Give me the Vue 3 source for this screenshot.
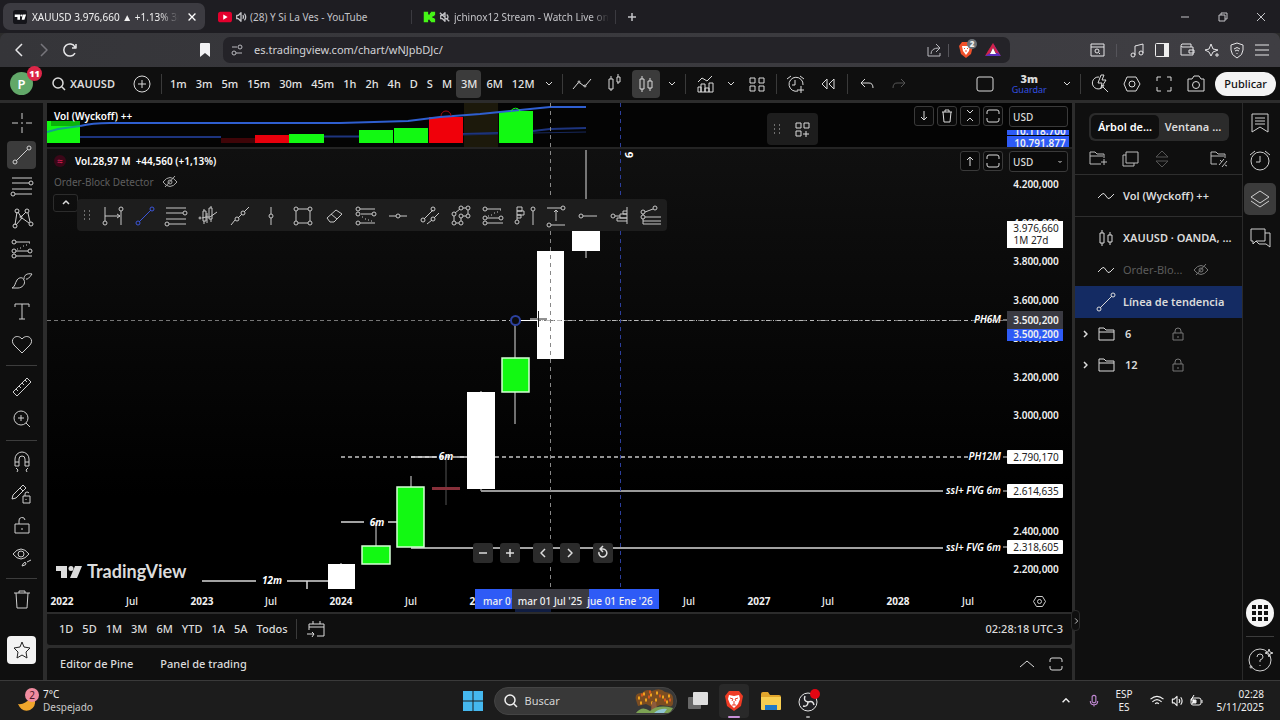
<script setup>
import { h, ref } from 'vue'

const c = (x, y, r = 2) => `M${x - r} ${y}a${r} ${r} 0 1 0 ${2 * r} 0a${r} ${r} 0 1 0 ${-2 * r} 0`

const fib = 'M-10-8H10M-10-3H7M-10 3H10M-7 8H10' + c(9, -3) + c(-9, 8)
const fibExt = 'M-6-7H8M-6 2H6M-6 7H10M-5 0h1M-2-1h1M1-3h1M4-4h1M7-6h1' + c(-8, -7) + c(-8, 2) + c(8, 2) + c(-8, 7)
const trend = 'M-6 6L6-6' + c(7, -7) + c(-7, 7)
const lock = 'M-5-1H5V6H-5ZM-3-1V-3A3 3 0 0 1 3-3V-1M0 2V4'
const expand = 'M-6-2V-4Q-6-6-4-6H4Q6-6 6-4V-2M6 2V4Q6 6 4 6H-4Q-6 6-6 4V2'
const eyeOff = 'M-7 0Q0-9 7 0Q0 9-7 0Z' + c(0, 0, 2) + 'M-5 5L5-6'
const candles = 'M-6-5H-2V5H-6ZM-4-8V-5M-4 5V8M2-3H6V4H2ZM4-6V-3M4 4V7'

const icons = {
  cross: 'M0-10V-4M0 4V10M-10 0H-4M4 0H10M0-1V1',
  trend, fib, fibExt,
  pattern: 'M-7 7L-5-6M-4-6L-1-1L4-6M6-5L8 4M7 5L0 0L-6 7' + c(-5, -7) + c(5, -7) + c(-1, -1, 1) + c(-7, 8) + c(9, 6),
  brush: 'M-10 7C-7 6-7 2-5-1C-3-4 1-4 2-1C4 3 0 7-4 7ZM2-2C2-6 5-8 10-7M4-2Q6-1 10-7',
  text: 'M-7-5V-8H7V-5M0-8V7M-3 7H3',
  heart: 'M0 9L-8 1C-13-5-5-11 0-5C5-11 13-5 8 1Z',
  ruler: 'M-9 5L5-9L9-5L-5 9ZM-6 2L-4 4M-3-1L-1 1M0-4L2-2M3-7L5-5',
  zoom: c(-1, -1, 7) + 'M4 4L8 8M-4-1H2M-1-4V2',
  magnet: 'M-7 4V-3A7 7 0 0 1 7-3V4H3V-3A3 3 0 0 0-3-3V4ZM-7 0H-3M3 0H7M-6 6L-4 8L-5 10M6 6L4 8L5 10',
  penLock: 'M-9 1L1-9L4-6L-6 4L-10 5ZM-2-6L1-3M1 2H8V9H1ZM3 2V0Q3-2 5-2Q6-2 7-1M4 5V6',
  unlock: 'M-7-1H7V8H-7ZM-3-1V-4A3 3 0 0 1 3-5M0 3V5',
  eyePen: 'M-9-3Q-1-13 7-3Q-1 7-9-3Z' + c(-1, -3, 3) + 'M0 9Q2 4 4 6Q5 8 0 9M5 5L9 3',
  trash: 'M-8-7H8M-3-7V-9H3V-7M-6-7L-5 8H5L6-7',
  star: 'M0-8L2-3L8-2L4 2L5 8L0 5L-5 8L-4 2L-8-2L-2-3Z',
  range: 'M-8-9V5M8-5V9M-8 0H7M4-2L7 0L4 2' + c(-8, 7) + c(8, -7),
  patternBars: 'M-6 2L-2 1L2 1L9-4M-5-5H-2V5H-5ZM-4-7V-5M-4 5V8M1-8H4V3H1ZM3-10V-8M3 3V6M-1-3V7' + c(-8, 2, 1),
  segment: 'M-9 9L-5 4M-2 2L2-2M4-4L9-9' + c(-3, 3) + c(3, -3),
  vline: 'M0-9V-2M0 2V9' + c(0, 0),
  hline: 'M-9 0H-2M2 0H9' + c(0, 0),
  rect: 'M-5-7H5M-5 7H5M-7-5V5M7-5V5' + c(-7, -7) + c(7, -7) + c(-7, 7) + c(7, 7),
  eraser: 'M-8 2L1-6L7-2L-1 6H-5ZM-4-2L2 3',
  fibChan: 'M-6-7H9M-5-2H6M-6 7H9M-4 1h1M-1 3h1M2 4h1M5 5h1' + c(-8, -7) + c(-8, -2) + c(8, -2) + c(-8, 7),
  channel: 'M-6 3L3-6M-3 8L2 4M4 2L9-3' + c(-7, 4) + c(3, -7) + c(3, 3),
  poly: 'M-6-3L-1-7M2-8H5M7-6V-2M5 0H2M0 2V5M-2 7H-5M-7 5V0' + [[-7, -2], [0, -8], [7, -8], [7, 0], [0, 0], [0, 7], [-7, 7]].map(p => c(p[0], p[1], 2)).join(''),
  profile: 'M-8-9V4M-8-9H-3V-5H-8M-8-5H-1V-1H-8M-8-1H-4V2H-8M8-5V9' + c(-8, 6) + c(8, -7),
  priceRange: 'M-9-8H5M-5 9H9M0 5V-6M-2-4L0-6L2-4' + c(7, -8) + c(-7, 9),
  ray: 'M-5 0H9' + c(-7, 0),
  anchored: 'M7-9V8M7-5H3V-2H7M7-2H0V2H7M7 2H-3V5H7M-5 0H0' + c(-7, 0),
  pitch: 'M2-7L-6-4M-8-2V-1M-6 1H10M-8 3V5H10M-8 5V8H10' + c(4, -8) + c(-8, -4) + c(-8, 1),
  search: c(-1, -1, 5) + 'M3 3L6 6',
  plusCircle: c(0, 0, 8) + 'M-4 0H4M0-4V4',
  down: 'M-3-2L0 1L3-2',
  up: 'M-3 1L0-2L3 1',
  bigUp: 'M-7 3L0-3L7 3',
  left: 'M2-4L-2 0L2 4',
  right: 'M-2-4L2 0L-2 4',
  small: 'M-1-3L2 0L-1 3',
  line: 'M-9 5L-4-1M-2-1L2 2M4 1L9-5' + c(-3, -2, 1) + c(3, 2, 1),
  hollow: 'M-5-5H-1V5H-5ZM-3-8V-5M-3 5V7M3-7H6V-2H3ZM4-10V-7M4-2V0',
  candles,
  indicators: 'M-7 8V3H-4V8M-4 8V0H0V8M0 8V4H4V8M4 8V-1H8V8H-7M-7-2L-3-6L2-3L7-8',
  grid4: 'M-7-6H-2V-1H-7ZM2-6H7V-1H2ZM-7 2H-2V7H-7ZM2 2H7V7H2Z',
  gridPlus: 'M-6-6H-1V-1H-6ZM2-6H7V-1H2ZM-6 2H-1V7H-6ZM4 2V8M1 5H7',
  alert: 'M2 7A7 7 0 1 1 7 1M-1-4V1H-4M5 2V9M1 6H8M-9-5L-5-8M4-8L8-5',
  rewind: 'M-1-5V5L-6 0ZM6-5V5L1 0Z',
  undo: 'M-2-5L-6-1L-2 3M-6-1H2Q6-1 6 4',
  redo: 'M2-5L6-1L2 3M6-1H-2Q-6-1-6 4',
  square: 'M-6-7H6Q8-7 8-5V5Q8 7 6 7H-6Q-8 7-8 5V-5Q-8-7-6-7Z',
  quick: 'M3 3L8 8M-1-7A6 6 0 1 0 4 1M1-9L-2-1H2L1 4L6-4H2L4-9Z',
  hex: 'M-5-7H4L8 0L4 7H-5L-8 0Z' + c(0, 0, 3),
  full: 'M-7-3V-7H-3M3-7H7V-3M7 3V7H3M-3 7H-7V3',
  camera: 'M-8-5H-4L-2-8H3L5-5H8V7H-8Z' + c(0, 1, 3.5),
  arrowDown: 'M0-5V4M-3 1L0 4L3 1',
  arrowUp: 'M0 5V-4M-3-1L0-4L3-1',
  bin: 'M-5-4H5M-2-4V-6H2V-4M-4-4L-3 6H3L4-4',
  collapse: 'M-3-6L0-3L3-6M-3 5L0 2L3 5',
  expand, eyeOff,
  folder: 'M-8-6H-3L-1-4H7V6H-8ZM-8-2H7',
  folderPlus: 'M3 5H-8V-7H-3L-1-5H6V-1M-8-3H5M6 0V6M3 3H9',
  copy: 'M-4-7H8V4H-4ZM-4-4H-7V7H4V4',
  sort: 'M0-8L6-2H-6ZM0 8L6 2H-6Z',
  folderOff: 'M-2 5H-8V-7H-3L-1-5H6V-1M-8-3H5M0 6L5 0M3 8L8 2M1 1L3 3M6 6L8 7',
  wave: 'M-8 2L-4-2Q-2-4 0 0Q2 4 4 2L8-2',
  lock,
  watch: 'M-8-9H8V9L0 4L-8 9ZM-5-5H5M-5-2H5M-5 1H5',
  clock: c(0, 0, 9) + 'M0-5V1H-4M-10-6L-5-10M10-6L5-10',
  layers: 'M0-8L9-2L0 4L-9-2ZM-9 2L0 8L9 2',
  chat: 'M-9-8H5V4H-4L-7 7V4H-9ZM5-4H10V10L6 7H-1L-4 4',
  help: c(0, 0, 11) + 'M-3-3Q-3-6 0-6T3-3Q3-1 0 0V2M0 5V6M9-11L10-8L13-7L10-6L9-3L8-6L5-7L8-8Z' + c(-9, 7, 1),
  calendar: 'M-7 1V-5H8V7H1M-7-2H8M-3-8V-5M4-8V-5M-9 5H-2M-4 3L-2 5L-4 8',
  minus: 'M-4 0H4',
  plus: 'M-4 0H4M0-4V4',
  reset: 'M-4-1A4 4 0 1 0 0-4H-2M0-7L-3-4L0-1',
  reload: 'M6-3A6 6 0 1 0 6 3M7-6V-2H3',
  share: 'M-6-3V6H6V3M-3 4Q-3-2 5-2M2-6L6-2L2 2',
  tune: 'M-5-3H0M-1 3H5' + c(3, -3) + c(-3, 3),
  tabSearch: 'M-6-6H7V6H-6ZM-6-3H7' + c(0, 1, 2) + 'M2 3L3 4',
  music: 'M-2 5V-4L6-6V3' + c(-4, 5) + c(4, 3),
  wallet: 'M-6-4V5H6V-3H-5Q-7-5-5-6H4V-3M2 0H7V3H2Z',
  spark: 'M-1-6L1-1L6 0L1 2L-1 6L-3 2L-7 0L-3-1ZM5 3V7M3 5H7',
  shield: 'M0-7L6-5V0Q6 5 0 8Q-6 5-6 0V-5ZM-3-1Q0-4 3-1M-2 1Q0-1 2 1M0 3V4',
  menu: 'M-7-5H7M-7 0H7M-7 5H7',
  close: 'M-4-4L4 4M4-4L-4 4',
  restore: 'M-4-2H2V4H-4ZM-2-2V-4H4V2H2',
  wifi: 'M-7-2Q0-8 7-2M-5 1Q0-4 5 1M-2 3Q0 1 2 3M0 5V5',
  speaker: 'M-5-2H-3L0-5V5L-3 2H-5ZM2-2Q4 0 2 2M4-4Q7 0 4 4',
  muted: 'M-5-2H-3L0-5V5L-3 2H-5ZM2-3Q5 0 2 3M-6-5L5 5',
  mic: 'M-2-5Q0-7 2-5V1Q0 3-2 1ZM-4 0Q-4 4 0 4T4 0M0 4V6',
}
const Icon = ({ name }) => h('svg', { class: 'icon', viewBox: '-14 -14 28 28', 'aria-hidden': 'true' }, [h('path', { d: icons[name] })])
Icon.props = ['name']

const intervals = ['1m', '3m', '5m', '15m', '30m', '45m', '1h', '2h', '4h', 'D', 'S', 'M', '3M', '6M', '12M']
const toolGroups = [
  { id: 'draw', items: [['cross', 'Cursor'], ['trend', 'Línea de tendencia'], ['fib', 'Fibonacci'], ['pattern', 'Patrones'], ['fibExt', 'Proyección'], ['brush', 'Pincel'], ['text', 'Texto'], ['heart', 'Iconos']] },
  { id: 'measure', items: [['ruler', 'Medir'], ['zoom', 'Acercar']] },
  { id: 'manage', items: [['magnet', 'Imán'], ['penLock', 'Modo dibujo'], ['unlock', 'Bloquear'], ['eyePen', 'Ocultar']] },
]
const favs = ['range', 'trend', 'fib', 'patternBars', 'segment', 'vline', 'rect', 'eraser', 'fibChan', 'hline', 'channel', 'poly', 'fibExt', 'profile', 'priceRange', 'ray', 'anchored', 'pitch']
const prices = [['4.200,000', 184], ['4.000,000', 223], ['3.800,000', 261], ['3.600,000', 300], ['3.400,000', 338], ['3.200,000', 377], ['3.000,000', 415], ['2.400,000', 531], ['2.200,000', 569]]
const tags = [['2.790,170', 457], ['2.614,635', 491], ['2.318,605', 547]]
const times = [['2022', 62], ['Jul', 132], ['2023', 202], ['Jul', 271], ['2024', 341], ['Jul', 411], ['2025', 481], ['Jul', 689], ['2027', 759], ['Jul', 828], ['2028', 898], ['Jul', 968]]
const ranges = ['1D', '5D', '1M', '3M', '6M', 'YTD', '1A', '5A', 'Todos']
const volumes = [[47, 33, 121, '#12f912'], [221, 34, 138, '#3f0508'], [255, 34, 135, '#e8000c'], [289, 35, 134, '#12f912'], [359, 34, 130, '#12f912'], [394, 34, 128, '#12f912'], [429, 34, 117, '#f0000a'], [499, 34, 111, '#12f912']]
const wicks = [[586, 150, 258], [515, 320, 424], [481, 391, 491], [411, 476, 487], [376, 522, 546], [341, 563, 566]]
const solid = [[572, 204, 28, 47], [537, 251, 27, 108], [467, 392, 28, 97], [328, 564, 27, 25]]
const green = [[502, 358, 27, 34], [397, 487, 27, 60], [362, 546, 28, 18]]
const url = ref('es.tradingview.com/chart/wNJpbDJc/')
const query = ref('')
</script>

<template>
  <div class="screen">
    <header class="tabs">
      <button class="tab active">
        <svg class="fav" viewBox="0 0 16 16"><rect width="16" height="16" rx="3" fill="#15151a" /><path d="M2 5h6v6H5V8H2zM11 5h4l-2 6h-3z" fill="#fff" /><circle cx="9.5" cy="6.2" r="1.2" fill="#fff" /></svg>
        <span class="tab-title">XAUUSD 3.976,660 ▲ +1.13% 3m</span><Icon name="close" class="heavy x-icon" />
      </button>
      <button class="tab">
        <svg class="fav" viewBox="0 0 16 16"><rect y="2" x="0" width="16" height="12" rx="3" fill="#e3002d" /><path d="M6 5l5 3-5 3z" fill="#fff" /></svg>
        <Icon name="speaker" class="sound" /><span class="tab-title">(28) Y Si La Ves - YouTube</span>
      </button>
      <i class="tab-sep"></i>
      <button class="tab third">
        <svg class="fav" viewBox="0 0 16 16"><path d="M2 2h5v3h2V3.500h1V2h5v4h-1v1h-2v2h2v1h1v4h-5v-1.500H9V11H7v3H2z" fill="#45f516" /></svg>
        <Icon name="muted" class="sound" /><span class="tab-title">jchinox12 Stream - Watch Live on</span>
      </button>
      <i class="tab-sep"></i>
      <button class="ib" aria-label="Nueva pestaña"><Icon name="plus" class="heavy" /></button>
      <span class="grow"></span>
      <button class="win" aria-label="Minimizar"><Icon name="minus" /></button>
      <button class="win" aria-label="Restaurar"><Icon name="restore" /></button>
      <button class="win" aria-label="Cerrar"><Icon name="close" /></button>
    </header>

    <nav class="nav">
      <button class="nb" aria-label="Atrás"><Icon name="left" class="big" /></button>
      <button class="nb dim" aria-label="Adelante"><Icon name="right" class="big" /></button>
      <button class="nb" aria-label="Recargar"><Icon name="reload" class="mid" /></button>
      <button class="nb mark" aria-label="Marcador"><svg viewBox="0 0 12 14" width="12" height="14"><path d="M1 1q0-1 1-1h8q1 0 1 1v13l-5-4-5 4z" fill="#f2f2f4" /></svg></button>
      <div class="url">
        <Icon name="tune" />
        <input v-model="url" aria-label="Dirección" />
        <Icon name="share" /><i class="vs"></i>
        <span class="brave-shield">
          <svg viewBox="0 0 14 16" width="14" height="16"><path d="M3 0h8l3 4-2 8-5 4-5-4-2-8z" fill="#f0502a" /><path d="M3 4h8l-1 5-3 4-3-4z" fill="#fff" /><path d="M5 6l1 1M9 6L8 7M6 9h2" stroke="#f0502a" /></svg>
          <b>2</b>
        </span>
        <svg class="tri" viewBox="0 0 16 14" width="16" height="14"><path d="M8 0L4 7 0 13z" fill="#f04a2c" /><path d="M8 0l8 13-5-3z" fill="#a3278f" /><path d="M0 13l4-3h8l4 3z" fill="#5b2fbf" /><path d="M8 0L0 13l5-3 3-5 3 5 2 0z" fill="#d2224c" /><path d="M8 5l3 6H5z" fill="#fff" /></svg>
      </div>
      <span class="grow"></span>
      <button class="nb" aria-label="Buscar pestañas"><Icon name="tabSearch" /></button><i class="vs wide"></i>
      <button class="nb" aria-label="Música"><Icon name="music" /></button>
      <button class="nb" aria-label="Panel lateral"><svg viewBox="0 0 14 14" width="14" height="14"><rect x=".5" y=".5" width="13" height="13" rx="1" fill="none" stroke="#eee" /><rect x="9" y="0" width="5" height="14" fill="#eee" /></svg></button>
      <button class="nb" aria-label="Cartera"><Icon name="wallet" /></button>
      <button class="nb" aria-label="Leo"><Icon name="spark" /></button>
      <button class="nb" aria-label="VPN"><Icon name="shield" /></button>
      <button class="nb" aria-label="Menú"><Icon name="menu" /></button>
    </nav>

    <div class="bar">
      <button class="avatar" aria-label="Perfil">P<b>11</b></button>
      <button class="symbol"><Icon name="search" class="heavy" />XAUUSD</button>
      <button class="ib" aria-label="Comparar"><Icon name="plusCircle" /></button>
      <i class="sep"></i>
      <button v-for="i in intervals" :key="i" class="interval" :class="{ on: i === '3M' }">{{ i }}</button>
      <button class="chev" aria-label="Más intervalos"><Icon name="down" /></button>
      <i class="sep"></i>
      <button class="ib" aria-label="Línea"><Icon name="line" /></button>
      <button class="ib" aria-label="Velas huecas"><Icon name="hollow" /></button>
      <button class="ib on" aria-label="Velas"><Icon name="candles" /></button>
      <button class="chev" aria-label="Tipos"><Icon name="down" /></button>
      <i class="sep"></i>
      <button class="ib" aria-label="Indicadores"><Icon name="indicators" /></button>
      <button class="chev" aria-label="Favoritos"><Icon name="down" /></button>
      <button class="ib" aria-label="Plantillas"><Icon name="grid4" /></button>
      <i class="sep"></i>
      <button class="ib" aria-label="Alerta"><Icon name="alert" /></button>
      <button class="ib" aria-label="Repetición"><Icon name="rewind" /></button>
      <i class="sep"></i>
      <button class="ib" aria-label="Deshacer"><Icon name="undo" /></button>
      <button class="ib faint" aria-label="Rehacer"><Icon name="redo" /></button>
      <span class="grow"></span>
      <button class="ib" aria-label="Diseño"><Icon name="square" /></button>
      <button class="save"><b>3m</b><span>Guardar</span></button>
      <button class="chev" aria-label="Diseños"><Icon name="down" /></button>
      <i class="sep"></i>
      <button class="ib" aria-label="Búsqueda rápida"><Icon name="quick" /></button>
      <button class="ib" aria-label="Ajustes"><Icon name="hex" /></button>
      <button class="ib" aria-label="Pantalla completa"><Icon name="full" /></button>
      <button class="ib" aria-label="Captura"><Icon name="camera" /></button>
      <button class="publish">Publicar</button>
    </div>

    <main class="work">
      <aside class="tools">
        <template v-for="g in toolGroups" :key="g.id">
          <div class="group" :class="g.id">
            <button v-for="[n, l] in g.items" :key="n" class="tool" :class="{ on: n === 'trend' }" :aria-label="l"><Icon :name="n" /></button>
          </div>
          <hr />
        </template>
        <button class="tool" aria-label="Eliminar"><Icon name="trash" /></button>
        <button class="tool starred" aria-label="Favoritos"><Icon name="star" /></button>
      </aside>

      <section class="center">
        <div class="chart">
          <svg class="canvas" viewBox="47 103 1025 509" preserveAspectRatio="xMidYMid meet">
            <defs>
              <linearGradient id="fade" x1="0" y1="0" x2="0" y2="1"><stop offset="0" stop-color="#101010" /><stop offset=".75" stop-color="#000" /></linearGradient>
              <clipPath id="upper"><rect x="1007" y="130" width="63" height="5" /></clipPath>
            </defs>
            <rect x="47" y="103" width="1025" height="44" fill="#040404" />
            <rect x="47" y="148" width="1025" height="464" fill="url(#fade)" />
            <rect x="464" y="103" width="34" height="44" fill="#1c190b" />
            <path d="M80 137H221" fill="none" stroke="#1d347e" stroke-width="2" />
            <path d="M324 136.500H359M463 134L498 133M533 131L550 129L586 128" fill="none" stroke="#1d347e" stroke-width="2" />
            <path d="M463 135L498 134M533 133L586 132" fill="none" stroke="#17285c" />
            <rect v-for="v in volumes" :key="v[0]" :x="v[0]" :y="v[2]" :width="v[1]" :height="143 - v[2]" :fill="v[3]" />
            <rect x="51" y="121" width="29" height="5" fill="#0ab40a" />
            <g fill="none">
              <path d="M47 132L58 129L80 126" stroke="#12a08c" stroke-width="2" />
              <path d="M80 126Q92 123 110 123H340L408 121L440 117L480 114L510 111L550 107H586" stroke="#2f5fd0" stroke-width="2" />
              <path d="M441 116A5 5 0 0 1 451 116" stroke="#a00c14" /><path d="M511 111A5 5 0 0 1 520 111" stroke="#12f912" />
            </g>
            <rect x="47" y="147" width="1025" height="2" fill="#242424" />

            <g stroke="#ddd"><line v-for="w in wicks" :key="w[0]" :x1="w[0]" :x2="w[0]" :y1="w[1]" :y2="w[2]" /></g>
            <line x1="446" x2="446" y1="460" y2="505" stroke="#555" />
            <rect x="432" y="487" width="28" height="3" fill="#87303a" />
            <g fill="none" stroke="#d8d8d8">
              <path d="M341 457H968" stroke="#c4c4c4" stroke-dasharray="4 3" stroke-width="1.500" />
              <path d="M411 457H437M457 457H467M341 522H364M388 522H397M202 581H256M287 581H328M307 581V589" stroke-width="1.500" />
              <path d="M481 491H943" stroke="#999" stroke-width="2" /><path d="M411 548H943" stroke-width="1.500" />
              <path d="M1003 320H1007M1003 457H1007M1003 491H1007M1003 547H1007" />
            </g>
            <rect v-for="s in solid" :key="s[0]" :x="s[0]" :y="s[1]" :width="s[2]" :height="s[3]" fill="#fff" />
            <rect v-for="s in green" :key="s[0]" :x="s[0]" :y="s[1]" :width="s[2]" :height="s[3]" fill="#12f912" stroke="#d5ffd5" stroke-width="1.500" />
            <g fill="none">
              <path d="M550.500 103V589" stroke="#888" stroke-dasharray="4 4" /><path d="M620.500 103V589" stroke="#2d3f9c" stroke-dasharray="4 4" />
              <path d="M47 320.500H1007" stroke="#777" stroke-dasharray="4 3" /><path d="M480 320.500H972" stroke="#bbb" stroke-dasharray="4 3 1 3" />
              <path d="M516 320.500H538" stroke="#fff" /><path d="M530 319H537" stroke="#fff" /><path d="M537 319H547M538.500 311V327" stroke="#222" />
              <circle cx="515.500" cy="320.500" r="4.500" fill="#0b0b0d" stroke="#2c419f" stroke-width="2" />
            </g>
            <g class="note">
              <text x="446" y="460">6m</text><text x="377" y="526">6m</text><text x="272" y="584">12m</text>
              <text class="end" x="1001" y="323">PH6M</text><text class="end" x="1001" y="460">PH12M</text>
              <text class="end" x="1001" y="494">ssl+ FVG 6m</text><text class="end" x="1001" y="551">ssl+ FVG 6m</text>
            </g>
            <text class="six" transform="translate(633 158) rotate(-90)">6</text>

            <g class="axis">
              <text v-for="p in prices" :key="p[0]" x="1036" :y="p[1] + 4">{{ p[0] }}</text>
              <g class="blue"><rect x="1007" y="130" width="62" height="5" /><rect x="1007" y="136" width="62" height="11" /></g>
              <text x="1040" y="135" clip-path="url(#upper)">10.118.700</text><text x="1040" y="147">10.791.877</text>
              <rect x="1007" y="221" width="56" height="27" fill="#fff" />
              <text class="dark" x="1036" y="232">3.976,660</text><text class="dark" x="1031" y="244">1M 27d</text>
              <rect x="1007" y="311" width="56" height="18" fill="#3a3a42" /><text x="1036" y="324">3.500,200</text>
              <g class="blue"><rect x="1007" y="329" width="56" height="12" /></g><text x="1036" y="338">3.500,200</text>
              <g v-for="t in tags" :key="t[0]"><rect x="1007" :y="t[1] - 7" width="56" height="14" rx="1" fill="#fff" /><text class="dark" x="1036" :y="t[1] + 4">{{ t[0] }}</text></g>
            </g>
            <g class="axis time">
              <text v-for="t in times" :key="t[1]" :class="{ thin: t[0] === 'Jul' }" :x="t[1]" y="605">{{ t[0] }}</text>
              <rect x="515" y="609" width="36" height="3" fill="#101d42" />
              <g class="blue"><rect x="475" y="589" width="40" height="20" /><rect x="588" y="589" width="71" height="20" /></g>
              <text class="thin start" x="483" y="605">mar 01</text>
              <rect x="512" y="589" width="77" height="20" fill="#3a3a42" />
              <text class="thin" x="550" y="605">mar 01 Jul '25</text><text class="thin" x="620" y="605">jue 01 Ene '26</text>
              <path d="M1036.500 596.500H1042.500L1045.500 601.500L1042.500 606.500H1036.500L1033.500 601.500Z" fill="none" stroke="#ccc" /><circle cx="1039.500" cy="601.500" r="2" fill="none" stroke="#ccc" />
            </g>
            <g fill="#dcdcdc"><path d="M56 566H67V578H61V571H56ZM75 566H82L77 578H70Z" /><circle cx="71" cy="568.500" r="2.500" /></g>
            <text class="logo" x="87" y="578">TradingView</text>
          </svg>

          <div class="legend one">Vol (Wyckoff) ++</div>
          <div class="legend two"><span class="approx">≈</span>Vol.28,97 M&nbsp; +44,560 (+1,13%)</div>
          <div class="legend three">Order-Block Detector<Icon name="eyeOff" /></div>
          <button class="fold" aria-label="Contraer leyenda"><Icon name="up" class="heavy" /></button>
          <div class="favs">
            <span class="drag"></span>
            <button v-for="f in favs" :key="f" class="favtool" :class="{ blue: f === 'trend' }" :aria-label="f"><Icon :name="f" /></button>
          </div>
          <div class="mini"><span class="drag"></span><button aria-label="Añadir"><Icon name="gridPlus" /></button></div>
          <div class="pane first">
            <button aria-label="Bajar panel"><Icon name="arrowDown" /></button><button aria-label="Eliminar panel"><Icon name="bin" /></button>
            <button aria-label="Contraer panel"><Icon name="collapse" /></button><button aria-label="Maximizar panel"><Icon name="expand" /></button>
            <span class="cur"><select aria-label="Moneda del volumen"><option>USD</option></select></span>
          </div>
          <div class="pane second">
            <button aria-label="Subir panel"><Icon name="arrowUp" /></button><button aria-label="Maximizar gráfico"><Icon name="expand" /></button>
            <span class="cur"><select aria-label="Moneda"><option>USD</option></select><Icon name="down" class="heavy" /></span>
          </div>
          <div class="zoomers">
            <button aria-label="Alejar"><Icon name="minus" class="heavy" /></button><button aria-label="Acercar"><Icon name="plus" class="heavy" /></button>
            <button class="gapped" aria-label="Izquierda"><Icon name="left" class="heavy" /></button><button aria-label="Derecha"><Icon name="right" class="heavy" /></button>
            <button class="gapped" aria-label="Restablecer"><Icon name="reset" class="heavy" /></button>
          </div>
        </div>
        <div class="ranges">
          <button v-for="r in ranges" :key="r">{{ r }}</button><i class="sep"></i>
          <button class="cal" aria-label="Ir a fecha"><Icon name="calendar" /></button>
          <span class="grow"></span><button class="clock">02:28:18 UTC-3</button>
        </div>
        <div class="bottom">
          <button>Editor de Pine</button><button>Panel de trading</button><span class="grow"></span>
          <button class="bi" aria-label="Abrir panel"><Icon name="bigUp" /></button><button class="bi" aria-label="Maximizar"><Icon name="expand" /></button>
        </div>
        <button class="handle" aria-label="Ocultar panel"><Icon name="small" /></button>
      </section>

      <aside class="objects">
        <div class="switch"><button class="on">Árbol de...</button><button>Ventana ...</button></div>
        <div class="acts">
          <button aria-label="Crear grupo"><Icon name="folderPlus" /></button><button aria-label="Copiar"><Icon name="copy" /></button>
          <button class="faint" aria-label="Mover"><Icon name="sort" /></button><span class="grow"></span><button aria-label="Administrar"><Icon name="folderOff" /></button>
        </div>
        <div class="row tall"><Icon name="wave" />Vol (Wyckoff) ++</div>
        <div class="row spaced"><Icon name="candles" /><b>XAUUSD · OANDA, ...</b></div>
        <div class="row off"><Icon name="wave" /><span>Order-Blo...</span><Icon name="eyeOff" class="after" /></div>
        <div class="row picked"><Icon name="trend" />Línea de tendencia</div>
        <div class="row dir"><Icon name="small" class="caret" /><Icon name="folder" /><b>6</b><Icon name="lock" class="locked" /></div>
        <div class="row dir"><Icon name="small" class="caret" /><Icon name="folder" /><b>12</b><Icon name="lock" class="locked" /></div>
      </aside>

      <aside class="side">
        <button aria-label="Lista"><Icon name="watch" /></button><button aria-label="Alertas"><Icon name="clock" /></button>
        <button class="on" aria-label="Árbol de objetos"><Icon name="layers" /></button><button aria-label="Chats"><Icon name="chat" /></button>
        <span class="grow"></span>
        <button class="apps" aria-label="Productos"><svg viewBox="0 0 28 28" width="28" height="28"><circle cx="14" cy="14" r="14" fill="#f5f5f5" /><path d="M8 6v4M14 6v4M20 6v4M8 12v4M14 12v4M20 12v4M8 18v4M14 18v4M20 18v4" stroke="#111" stroke-width="4" /></svg></button>
        <hr /><button aria-label="Ayuda"><Icon name="help" /></button>
      </aside>
    </main>

    <footer class="taskbar">
      <div class="weather">
        <svg viewBox="0 0 24 26" width="24" height="26"><path d="M1 16q7 1 12-6l5 2q1 7-5 10Q5 25 1 16z" fill="#f0a62c" /><circle cx="15" cy="7" r="7" fill="#f08ca0" /><text x="15" y="11" text-anchor="middle" font-size="10" fill="#4a1626">2</text></svg>
        <p>7°C<br /><span>Despejado</span></p>
      </div>
      <div class="dock">
        <svg viewBox="0 0 20 20" width="20" height="20"><path d="M0 0h9.500v9.500H0zM10.500 0H20v9.500h-9.500zM0 10.500h9.500V20H0zM10.500 10.500H20V20h-9.500z" fill="#45b8ef" /></svg>
        <label class="find">
          <Icon name="search" class="heavy" /><input v-model="query" placeholder="Buscar" aria-label="Buscar" />
          <svg class="tree" viewBox="0 0 44 26" width="44" height="26"><path d="M4 12Q2 5 10 5Q14 0 20 3Q28-1 33 4Q42 5 41 12Q42 20 36 18L28 17L22 20L14 16L6 18Z" fill="#7b4d22" /><path d="M6 10h3M11 6h3M13 12h3M18 7h3M24 5h3M23 12h3M30 9h3M36 8h3M34 14h3M8 15h3M19 15h3" stroke="#efa31c" stroke-width="3" stroke-dasharray="2 1" /><path d="M9 7h2M16 9h2M27 8h2M32 12h2M37 12h2M17 4h2" stroke="#d8571c" stroke-width="3" /><path d="M20 14h4l1 8h-6z" fill="#8c5b3c" /><path d="M4 25Q10 17 18 23Q26 16 41 20L38 25Z" fill="#7da354" /><path d="M22 25q6-5 13-4l-3 4z" fill="#8fc5d2" /></svg>
        </label>
        <svg viewBox="0 0 20 20" width="20" height="20"><rect x="0" y="6" width="13" height="12" rx="1" fill="#686868" /><rect x="5" y="1" width="15" height="13" rx="1" fill="#dedede" /></svg>
        <span class="app current"><svg viewBox="0 0 18 20" width="18" height="20"><path d="M4 0h10l4 5-2 10-7 5-7-5L0 5z" fill="#ee3b24" /><path d="M4 4l5 1 5-1 1 4-2 5-4 4-4-4-2-5z" fill="#fff" /><path d="M5 7l3 1-1 2M13 7l-3 1 1 2M9 10v4M7 14h4" stroke="#ee3b24" fill="none" /></svg></span>
        <svg viewBox="0 0 22 20" width="22" height="20"><path d="M1 3q0-2 2-2h5l2 3h9q2 0 2 2v12H1z" fill="#e0a52c" /><path d="M1 6h20v12q0 1-1 1H2q-1 0-1-1z" fill="#f8cf52" /><path d="M5 19v-5h12v5z" fill="#1f79c8" /></svg>
        <span class="app obs"><svg viewBox="0 0 24 24" width="24" height="24"><circle cx="12" cy="13" r="9" fill="#202024" stroke="#e4e4e4" /><path d="M12 13Q7 12 9 7M12 13Q17 11 18 16M12 13Q12 18 7 17" fill="none" stroke="#e4e4e4" stroke-width="1.500" /><circle cx="19" cy="5" r="5" fill="#e30613" /></svg></span>
      </div>
      <div class="tray">
        <Icon name="up" class="heavy" /><Icon name="mic" class="mic" />
        <p class="lang">ESP<br />ES</p>
        <Icon name="wifi" /><Icon name="speaker" />
        <svg viewBox="0 0 16 14" width="16" height="14"><rect x="2" y="4" width="10" height="7" rx="2" fill="none" stroke="#eee" /><path d="M13 6v3M4 6h3v3H4z" stroke="#eee" fill="#eee" /><path d="M5 1L2 6h3L3 10" fill="none" stroke="#fff" /></svg>
        <p class="when">02:28<br />5/11/2025</p>
      </div>
    </footer>
  </div>
</template>

<style>
body { margin: 0; background: #2c2c2c; }
</style>

<style scoped>
.screen { min-height: 100vh; display: flex; flex-direction: column; background: #2c2c2c; color: #dbdbdb; font: 600 11px/14px "Noto Sans", "Open Sans", sans-serif; overflow: hidden; }
.screen * { box-sizing: border-box; }
button, input, select { margin: 0; padding: 0; border: 0; background: none; color: inherit; font: inherit; white-space: nowrap; }
button { display: inline-flex; align-items: center; justify-content: center; flex-shrink: 0; }
p { margin: 0; }
.icon { width: 28px; height: 28px; flex-shrink: 0; fill: none; stroke: currentColor; stroke-width: 1; stroke-linejoin: round; overflow: visible; }
.heavy { stroke-width: 1.5; }
.grow { flex: 1; }
.faint { color: #555; }

.tabs { height: 33px; display: flex; align-items: center; padding-left: 3px; background: #1e1d22; font-weight: 400; font-size: 10px; color: #c4c4c8; }
.tab { width: 203px; height: 27px; padding: 0 0 0 10px; justify-content: flex-start; border-radius: 7px; }
.tab.active { width: 202px; margin-right: 3px; background: #3c3b41; color: #f2f2f2; }
.tab-title { min-width: 0; overflow: hidden; }
.active .tab-title { flex: 1; margin-left: 5px; -webkit-mask-image: linear-gradient(90deg, #000 86%, transparent); mask-image: linear-gradient(90deg, #000 86%, transparent); }
.third .tab-title { -webkit-mask-image: linear-gradient(90deg, #000 88%, transparent); mask-image: linear-gradient(90deg, #000 88%, transparent); }
.fav { width: 14px; height: 14px; flex-shrink: 0; }
.sound { width: 24px; height: 24px; margin: 0 -3px; stroke-width: 1.5; }
.tab-sep { width: 1px; height: 14px; background: #3b3a40; }
.x-icon { width: 26px; height: 24px; color: #fff; }
.win { width: 38px; }

.nav { height: 34px; display: flex; align-items: center; padding: 0 6px; background: linear-gradient(90deg, #353539, #3f3e43); border-radius: 7px 7px 0 0; color: #e6e6e8; }
.nb { width: 25px; height: 26px; }
.nb.dim { color: #77767c; }
.big { width: 42px; height: 42px; }
.mid { stroke-width: 1.5; }
.mark { margin-left: 111px; margin-right: 6px; }
.url { flex: 0 1 787px; min-width: 0; height: 26px; display: flex; align-items: center; border-radius: 7px; background: #242328; color: #b9b9be; }
.url input { flex: 1; min-width: 0; margin-left: 3px; font-weight: 400; font-size: 11px; color: #d2d2d6; outline: 0; }
.vs { width: 1px; height: 13px; background: #55545a; }
.vs.wide { margin: 0 7px; }
.brave-shield { position: relative; display: flex; margin: 0 12px 0 10px; }
.brave-shield b { position: absolute; top: -3px; left: 8px; width: 10px; height: 10px; border-radius: 5px; background: #6b7278; color: #eee; font-size: 8px; line-height: 10px; text-align: center; }
.tri { margin-right: 9px; }

.bar { height: 33px; display: flex; align-items: center; padding: 0 4px 0 10px; background: #0f0f0f; }
.avatar { position: relative; width: 23px; height: 23px; border-radius: 50%; background: #62a869; color: #fff; font-size: 13px; }
.avatar b { position: absolute; top: -6px; left: 17px; width: 15px; height: 15px; border-radius: 50%; background: #dc2648; font-size: 9px; line-height: 15px; }
.symbol { width: 81px; margin-left: 12px; justify-content: flex-start; }
.symbol .icon { margin-right: -3px; }
.ib { width: 32px; height: 28px; }
.ib.on, .interval.on { background: #3b3b3b; border-radius: 4px; }
.ib.on { width: 28px; margin: 0 2px; }
.interval { height: 28px; padding: 0 4px 0 5px; font-weight: 500; color: #e4e4e4; }
.chev { width: 20px; height: 28px; }
.sep { width: 1px; height: 20px; margin: 0 3px; background: #3a3a3a; flex-shrink: 0; }
.save { width: 56px; flex-direction: column; line-height: 12px; }
.save span { font-size: 9px; font-weight: 400; line-height: 10px; color: #3350e0; }
.publish { height: 24px; margin-left: 3px; padding: 0 9px; border-radius: 12px; background: #f3f3f3; color: #111; font-weight: 500; }

.work { flex: 1; display: flex; padding-top: 3px; }
.tools { width: 43px; display: flex; flex-direction: column; align-items: center; padding: 6px 0 16px; background: #0f0f0f; }
.group { display: flex; flex-direction: column; justify-content: space-between; }
.draw { height: 249px; }
.measure { height: 60px; }
.manage { height: 123px; }
.tool { width: 29px; height: 28px; border-radius: 4px; color: #cfcfcf; }
.tool.on { background: #3b3b3b; }
.tools hr, .side hr { width: 31px; height: 1px; margin: 7px 0; border: 0; background: #3d3d3d; flex-shrink: 0; }
.starred { margin-top: auto; background: #f3f3f3; color: #222; }

.center { position: relative; flex: 1; min-width: 0; display: flex; flex-direction: column; margin: 0 3px 0 4px; }
.chart { position: relative; flex: 1; min-height: 509px; background: #000; }
.canvas { display: block; width: 100%; height: 100%; }
.note text { font: italic 700 10px "Noto Sans", sans-serif; fill: #fff; text-anchor: middle; }
.note .end { text-anchor: end; font-weight: 600; }
.six { font: 700 11px "Noto Sans", sans-serif; fill: #fff; }
.axis text { font: 600 10px "Noto Sans", sans-serif; fill: #f0f0f0; text-anchor: middle; }
.axis .dark { fill: #222; font-weight: 400; }
.time text { font-weight: 700; }
.time .thin { font-weight: 500; }
.time .start { text-anchor: start; }
.axis .blue { fill: #2e5bf6; }
.logo { font: 700 18px Lato, sans-serif; fill: #dcdcdc; }
.legend { position: absolute; left: 7px; display: flex; align-items: center; height: 16px; color: #fff; font-size: 10px; }
.legend.one { top: 5px; }
.legend.two { top: 50px; }
.legend.three { top: 71px; font-weight: 400; color: #5e5e5e; }
.legend .icon { margin-left: 2px; color: #aaa; }
.approx { width: 12px; height: 12px; margin-right: 9px; border-radius: 50%; background: #3b0718; color: #d81f55; line-height: 12px; text-align: center; }
.fold { position: absolute; left: 6px; top: 91px; width: 25px; height: 18px; border: 1px solid #2c2c2c; border-radius: 3px; }
.favs { position: absolute; left: 30px; top: 96px; width: 590px; height: 32px; display: flex; align-items: center; border-radius: 4px; background: #1d1d1d; color: #c8c8c8; }
.drag { width: 10px; height: 12px; margin: 0 5px; flex-shrink: 0; background: radial-gradient(circle, #707070 1px, transparent 1px) 0 0 / 5px 4px; }
.favtool { flex: 1; height: 28px; padding-top: 1px; }
.favtool.blue { color: #3b55d8; }
.mini { position: absolute; left: 720px; top: 10px; width: 51px; height: 32px; display: flex; align-items: center; border-radius: 4px; background: #1d1d1d; }
.mini .drag { margin-right: 6px; }
.pane { position: absolute; right: 4px; display: flex; gap: 3px; }
.pane.first { top: 3px; }
.pane.second { top: 48px; }
.pane button, .pane .cur { width: 20px; height: 20px; border: 1px solid #3a3a3a; border-radius: 3px; background: #0a0a0a; }
.pane .cur { position: relative; width: 59px; height: 21px; margin-left: 3px; }
.cur select { appearance: none; width: 100%; height: 100%; padding-left: 3px; font-size: 10px; font-weight: 500; outline: 0; }
.cur .icon { position: absolute; right: 0; top: 3px; width: 14px; height: 14px; stroke-width: 2; pointer-events: none; }
.zoomers { position: absolute; left: 426px; top: 440px; display: flex; gap: 7px; }
.zoomers button { width: 20px; height: 20px; border-radius: 3px; background: #2b2b2b; color: #ddd; }
.zoomers .gapped { margin-left: 6px; }
.zoomers .icon { width: 28px; height: 28px; }

.ranges { height: 31px; display: flex; align-items: center; margin-top: 2px; padding: 0 9px 1px 7px; background: #0f0f0f; border-radius: 0 0 3px 3px; font-weight: 500; }
.ranges button { padding: 0 4px 0 5px; }
.ranges .sep { margin-left: 4px; }
.ranges .cal { padding: 0 2px; }
.ranges .clock { padding: 0; }
.bottom { height: 32px; display: flex; align-items: center; margin-top: 3px; padding: 0 2px 0 13px; background: #0f0f0f; border-radius: 3px 3px 0 0; font-weight: 500; }
.bottom button { margin-right: 27px; }
.bottom .bi { width: 29px; margin: 0; }
.handle { position: absolute; right: -8px; top: 507px; width: 9px; height: 21px; border: 1px solid #2c2c2c; border-radius: 4px; background: #0f0f0f; z-index: 1; }
.handle .icon { width: 24px; height: 24px; }

.objects { width: 167px; background: #0f0f0f; }
.switch { display: flex; height: 28px; margin: 10px 13px 0 14px; padding: 2px; border-radius: 6px; background: #2b2b2b; }
.switch button { flex: 1; border-radius: 5px; }
.switch .on { background: #0f0f0f; color: #fff; }
.acts { display: flex; gap: 4px; padding: 4px 9px 1px; border-bottom: 1px solid #2e2e2e; color: #bbb; }
.acts .faint { color: #555; }
.row { display: flex; align-items: center; height: 32px; padding-left: 17px; white-space: nowrap; }
.row b { font-weight: 600; }
.row > .icon:first-child { margin-right: 3px; }
.row.tall { height: 42px; border-bottom: 1px solid #2e2e2e; }
.row.spaced { margin-top: 5px; overflow: hidden; }
.row.off span { color: #5c5c5c; font-weight: 400; }
.row .after, .row .locked { color: #777; }
.row .after { margin-left: 5px; }
.row.picked { background: #142b63; }
.row.dir { height: 31px; padding-left: 0; }
.row.dir b { width: 39px; margin-left: 4px; }
.row.dir > .caret:first-child { width: 28px; margin: 0 -6px 0 -4px; stroke-width: 1.5; }

.side { width: 38px; display: flex; flex-direction: column; align-items: center; padding: 4px 3px 4px 0; border-left: 1px solid #2a2a2a; background: #0f0f0f; color: #cfcfcf; }
.side button { width: 32px; height: 32px; margin-bottom: 6px; border-radius: 5px; }
.side .on { background: #3b3b3b; }
.side .apps { height: 28px; margin: 0 0 3px; }
.side button:last-child { margin-bottom: 0; }
.side hr { width: 28px; margin: 6px 0 7px; }

.taskbar { height: 40px; display: grid; grid-template-columns: 1fr auto 1fr; align-items: center; border-top: 1px solid #3a3a3a; background: #1c1c1c; color: #f0f0f0; font: 400 10px/13px "Noto Sans", sans-serif; }
.weather { display: flex; align-items: center; gap: 2px; padding-left: 17px; }
.weather span { color: #c9c9c9; }
.dock { display: flex; align-items: center; margin-left: 16px; }
.find { display: flex; align-items: center; width: 183px; height: 28px; margin: 0 11px 0 11px; padding-left: 2px; border: 1px solid #444; border-radius: 14px; background: #383838; overflow: hidden; }
.find input { flex: 1; min-width: 0; font-size: 11px; outline: 0; }
.find input::placeholder { color: #d4d4d4; opacity: 1; }
.app { position: relative; width: 30px; height: 34px; display: grid; place-items: center; margin: 0 11px; border-radius: 4px; }
.app::after { content: ""; position: absolute; bottom: 0; left: 13px; width: 4px; height: 2px; border-radius: 1px; background: #999; }
.current { background: #292929; }
.current::after { left: 9px; width: 12px; background: #c78fd6; }
.tray { display: flex; align-items: center; justify-content: flex-end; padding-right: 16px; }
.tray .icon { width: 26px; height: 26px; margin: 0 -3px; stroke-width: 1.2; }
.tray .heavy { width: 32px; height: 32px; }
.tray .mic { margin: 0 8px 0 2px; color: #c48ad6; }
.tray .lang { margin-right: 14px; text-align: center; }
.tray svg:last-of-type { margin-left: 2px; }
.tray .when { margin-left: 12px; text-align: right; }
</style>
